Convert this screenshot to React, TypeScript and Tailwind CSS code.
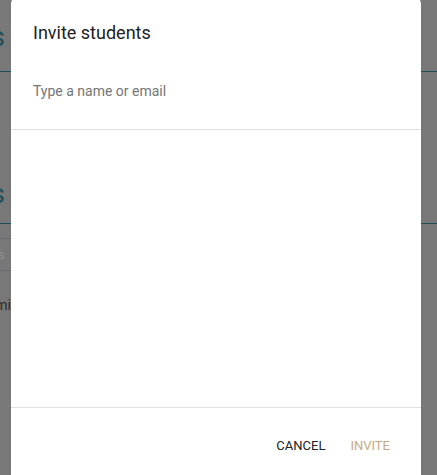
export default function App() {
  return (
    <div
      className="relative h-[475px] w-[437px] overflow-hidden bg-[#787878]"
      style={{ fontFamily: 'Roboto, "Liberation Sans", Arial, sans-serif' }}
    >
      {/* page behind the dim overlay */}
      <div className="flex flex-col">
        <div className="flex h-[71px] items-start pt-[19px]">
          <div className="flex w-[5px] justify-end">
            <span className="whitespace-nowrap text-[28px] leading-[36px] text-[#1d4f5a]">Teachers</span>
          </div>
        </div>
        <div className="h-px bg-[#1d4f5a]" />
        <div className="flex h-[151px] items-start pt-[104px]">
          <div className="flex w-[5px] justify-end">
            <span className="whitespace-nowrap text-[28px] leading-[36px] text-[#1d4f5a]">Students</span>
          </div>
        </div>
        <div className="h-px bg-[#1d4f5a]" />
        <div className="h-[14px]" />
        <div className="h-px w-[12px] bg-[#5f6d72]" />
        <div className="flex h-[31px] items-center">
          <div className="flex w-[5px] justify-end">
            <span className="whitespace-nowrap text-[12px] text-[#8d8d8d]">Actions</span>
          </div>
        </div>
        <div className="h-px w-[12px] bg-[#5f6d72]" />
        <div className="flex h-[60px] items-center pt-[8px]">
          <div className="flex w-[11px] justify-end">
            <span className="whitespace-nowrap text-[14px] text-[#2b2b2b]">Jamie Smi</span>
          </div>
        </div>
      </div>

      {/* dialog */}
      <div className="absolute left-[11px] top-[-4px] flex w-[410px] flex-col rounded-lg bg-white">
        <div className="px-[22px] pt-[25px]">
          <h2 className="text-[18px] font-normal leading-[24px] text-[#202124]">Invite students</h2>
        </div>
        <div className="px-[22px] pt-[36px] pb-[28px]">
          <div className="text-[14px] leading-[20px] text-[#757575]">Type a name or email</div>
        </div>
        <div className="h-px bg-[#e0e0e0]" />
        <div className="h-[277px]" />
        <div className="h-px bg-[#e0e0e0]" />
        <div className="flex justify-end gap-[9px] pr-[23px] pt-[20px] pb-[40px]">
          <button className="h-[36px] px-2 text-[13px] font-normal leading-[36px] text-[#202124]">CANCEL</button>
          <button className="h-[36px] px-2 text-[13px] font-normal leading-[36px] text-[#c9a985]">INVITE</button>
        </div>
      </div>
    </div>
  )
}
